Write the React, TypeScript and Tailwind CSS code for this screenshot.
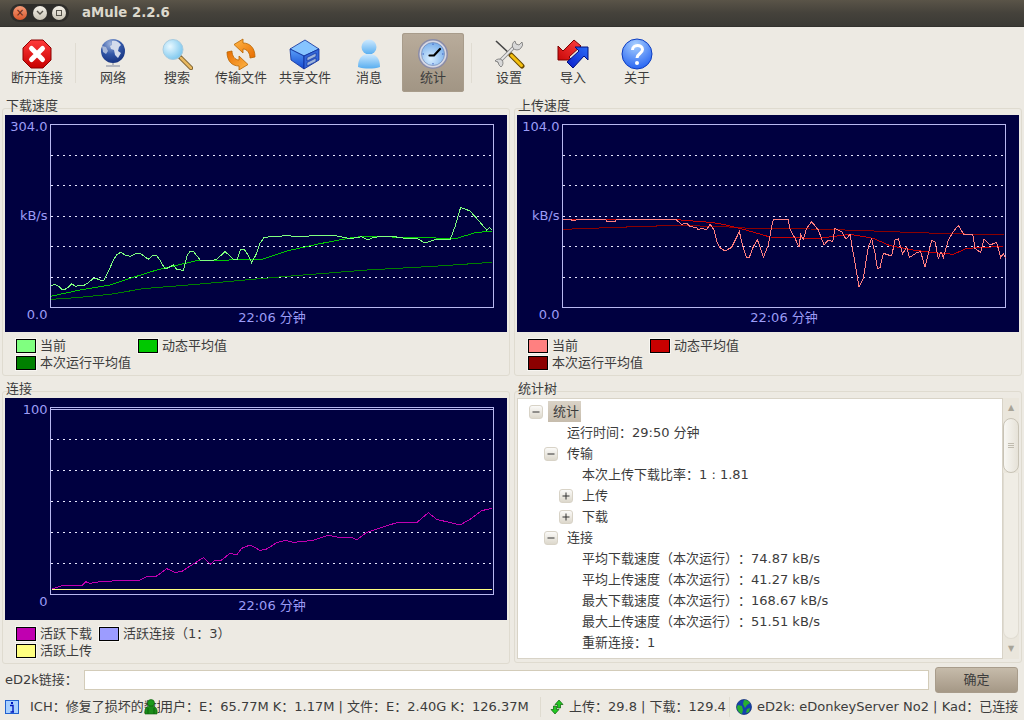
import type { ReactNode } from "react";

const FONT = "[font-family:'DejaVu_Sans','Noto_Sans_CJK_SC',sans-serif] [text-spacing-trim:space-all]";

// chart lines, read off the screenshot at 3x
const DL_NOW =
  "152,288 165,283 175,288 185,298 197,297 207,290 215,282 228,289 238,285 250,287 262,280 278,267 290,266 300,270 312,270 325,245 340,210 350,195 362,187 375,195 392,199 405,192 420,190 430,197 445,208 458,196 470,197 480,210 495,237 505,233 520,225 530,238 550,241 562,195 570,185 582,186 600,210 615,210 635,212 650,208 675,185 690,198 700,208 712,208 722,177 732,177 745,197 755,218 770,190 780,160 792,143 810,140 865,137 900,141 935,137 1000,136 1050,146 1085,140 1105,150 1120,142 1170,138 1215,145 1250,145 1275,159 1295,152 1310,147 1350,150 1365,110 1382,52 1410,63 1430,85 1460,120 1468,113 1476,120";
const DL_AVG =
  "152,319 240,300 330,285 400,262 470,240 590,212 785,208 860,183 960,161 1050,144 1090,139 1350,145 1370,145 1430,127 1476,124";
const DL_RUN =
  "152,328 230,323 330,313 430,296 600,282 860,259 1100,240 1300,229 1476,217";
const UL_NOW =
  "158,89 182,89 190,92 204,89 288,89 290,95 316,95 318,89 498,89 515,103 530,99 540,110 560,112 565,120 575,115 590,120 600,102 612,120 622,160 632,175 645,183 665,172 688,125 700,175 710,202 718,202 730,170 742,149 750,170 760,202 775,165 785,110 790,89 835,89 840,118 855,145 867,172 872,133 880,147 890,115 905,95 925,120 942,165 955,150 968,155 975,115 995,125 1008,148 1020,133 1030,190 1047,292 1060,265 1075,170 1085,146 1095,190 1102,235 1110,233 1120,190 1145,198 1155,150 1165,147 1178,192 1190,170 1198,203 1220,188 1232,185 1245,232 1265,152 1275,155 1285,205 1293,185 1300,203 1315,150 1330,125 1345,106 1362,135 1388,133 1395,175 1412,188 1422,148 1440,165 1460,157 1472,203 1480,190 1486,203";
const UL_AVG =
  "158,89 500,89 600,97 640,103 700,118 780,141 830,142 920,146 1020,133 1090,145 1140,167 1210,180 1260,187 1330,193 1370,175 1480,169";
const UL_RUN =
  "158,118 320,112 500,106 640,110 720,115 900,117 1040,121 1220,128 1400,133 1482,133";
const CONN =
  "155,327 185,317 247,316 257,305 270,310 305,304 370,302 420,300 440,290 470,288 500,266 525,277 545,275 575,255 610,233 632,253 645,240 665,240 690,220 710,225 725,205 750,195 780,211 800,207 830,188 855,181 880,187 940,181 985,166 1015,172 1055,172 1070,180 1100,157 1190,128 1250,128 1285,98 1310,118 1380,135 1410,118 1445,92 1475,85";

const toPlot = (raw: string, dx: number, dy: number) =>
  raw
    .split(" ")
    .map((p) => {
      const [x, y] = p.split(",").map(Number);
      return `${x / 3 + dx},${y / 3 + dy}`;
    })
    .join(" ");

type Line = { points: string; color: string };

const Chart = ({
  height,
  frameH,
  grid,
  top,
  mid,
  bottom,
  bottomY,
  timeY,
  lines,
}: {
  height: number;
  frameH: number;
  grid: number[];
  top: string;
  mid?: string;
  bottom: string;
  bottomY: number;
  timeY: number;
  lines: Line[];
}) => (
  <svg width={502} height={height} className="block bg-[#000040]">
    <rect x={45.5} y={9.5} width={443} height={frameH} fill="none" stroke="#b8b8f0" />
    {grid.map((y) => (
      <line key={y} x1={46} x2={488} y1={y + 0.5} y2={y + 0.5} stroke="#e8e8ff" strokeDasharray="2 4" />
    ))}
    {lines.map((l) => (
      <polyline key={l.color} points={l.points} fill="none" stroke={l.color} strokeWidth={1} shapeRendering="crispEdges" />
    ))}
    <g fill="#9c9cf6" fontSize={13} fontFamily="'DejaVu Sans','Noto Sans CJK SC',sans-serif">
      <text x={42.500} y={16} textAnchor="end">{top}</text>
      {mid && <text x={42.500} y={105} textAnchor="end">{mid}</text>}
      <text x={42.500} y={bottomY} textAnchor="end">{bottom}</text>
      <text x={267} y={timeY} textAnchor="middle">22:06 分钟</text>
    </g>
  </svg>
);

const Group = ({ title, children }: { title: string; children: ReactNode }) => (
  <div className="flex flex-col">
    <div className="relative z-10 h-4 leading-4 ml-1 -mb-[6px]">{title}</div>
    <div className="flex-1 rounded-[3px] border border-[#dfdbd0] px-[2px] pt-[6px]">{children}</div>
  </div>
);

const LegendItem = ({ color, label }: { color: string; label: string }) => (
  <div className="flex items-center h-[17px]">
    <span className={`block w-[20px] h-[14px] border border-black outline outline-1 outline-[#f8f6f2] ${color}`} />
    <span className="ml-1 whitespace-nowrap">{label}</span>
  </div>
);

const Legend = ({ children }: { children: ReactNode }) => (
  <div className="grid grid-cols-[auto_auto] justify-start content-start gap-x-[7px] pl-[11px] pt-[5px] h-[43px]">{children}</div>
);

const ToolBtn = ({ label, active, children }: { label: string; active?: boolean; children: ReactNode }) => (
  <div
    className={`h-[59px] flex flex-col items-center rounded-[3px] ${
      active ? "w-[62px] mx-px bg-gradient-to-b from-[#b9ac9b] to-[#a19584] shadow-[inset_0_0_0_1px_#a89c8b]" : "w-16"
    }`}
  >
    <div className="h-8 mt-[5px] flex items-center justify-center">{children}</div>
    <div className="leading-4 whitespace-nowrap">{label}</div>
  </div>
);

const Sep = () => <div className="w-[12px] h-[40px] mt-[10px] flex justify-center"><div className="w-px h-full bg-[#e0dcd2]" /></div>;

const StopIcon = () => (
  <svg width={32} height={32} viewBox="0 0 32 32">
    <defs>
      <linearGradient id="st" x1="0" y1="0" x2="0" y2="1">
        <stop offset="0" stopColor="#ff3a3a" />
        <stop offset="1" stopColor="#c80000" />
      </linearGradient>
    </defs>
    <path d="M10 2h12l8 8v12l-8 8H10l-8-8V10z" fill="url(#st)" stroke="#8c0000" strokeWidth={1} />
    <path d="M10.500 10.500l11 11M21.500 10.500l-11 11" stroke="#fff" strokeWidth={5} strokeLinecap="round" />
  </svg>
);

const GlobeIcon = () => (
  <svg width={32} height={32} viewBox="0 0 32 32">
    <defs>
      <radialGradient id="gl" cx="0.4" cy="0.2" r="0.85">
        <stop offset="0" stopColor="#9fb4dc" />
        <stop offset="0.5" stopColor="#3358a8" />
        <stop offset="1" stopColor="#14307c" />
      </radialGradient>
    </defs>
    <path d="M16 25v2M9 28h14" stroke="#a4a8b4" strokeWidth={1.500} />
    <circle cx={16} cy={13} r={12} fill="url(#gl)" />
    <path d="M15 3c4-1 7 1 9 4l-2 2-1 4 3 2-3 5-3-3-1-5-3-1-1-3 2-1z" fill="#d4dcec" />
    <path d="M5 8l4 1 2 4-2 3-3-2z" fill="#a8b8d8" />
  </svg>
);

const SearchIcon = () => (
  <svg width={32} height={32} viewBox="0 0 32 32">
    <defs>
      <radialGradient id="se" cx="0.35" cy="0.35" r="0.8">
        <stop offset="0" stopColor="#e8f8ff" />
        <stop offset="1" stopColor="#6cc0ec" />
      </radialGradient>
    </defs>
    <path d="M19 19l11 11" stroke="#7a6030" strokeWidth={4.500} strokeLinecap="round" />
    <path d="M20 20l10 10" stroke="#e8b860" strokeWidth={2.500} strokeLinecap="round" />
    <circle cx={12} cy={11.500} r={10} fill="url(#se)" stroke="#a8cce0" />
  </svg>
);

const TransferIcon = () => (
  <svg width={32} height={32} viewBox="0 0 32 32">
    <defs>
      <linearGradient id="tr" x1="0" y1="0" x2="1" y2="1">
        <stop offset="0" stopColor="#ffb848" />
        <stop offset="1" stopColor="#e86c00" />
      </linearGradient>
    </defs>
    <path d="M9 6.500L18 1v4c7 0 12 5 12 14l-5 1c0-5-3-9-7-9v4z" fill="url(#tr)" stroke="#b86400" strokeWidth={0.8} />
    <path d="M9 6.500L18 1v4c7 0 12 5 12 14l-5 1c0-5-3-9-7-9v4z" fill="url(#tr)" stroke="#b86400" strokeWidth={0.8} transform="rotate(180 16 16.500)" />
  </svg>
);

const CubeIcon = () => (
  <svg width={32} height={32} viewBox="0 0 32 32">
    <defs>
      <linearGradient id="cu" x1="0" y1="0" x2="0" y2="1">
        <stop offset="0" stopColor="#5aa0f8" />
        <stop offset="1" stopColor="#1448d0" />
      </linearGradient>
    </defs>
    <path d="M16 2L1 11l14 7 15-7z" fill="#86c4ff" stroke="#0c2c98" strokeWidth={0.8} />
    <path d="M1 11l14 7v13L2 22z" fill="url(#cu)" stroke="#0c2c98" strokeWidth={0.8} />
    <path d="M15 18l15-7v11l-15 9z" fill="#3466d8" stroke="#0c2c98" strokeWidth={0.8} />
    <path d="M18 19.500l9-4.500v3.500l-9 4.500zM18 24.500l9-4.500v3.500l-9 4.500z" fill="#9cb4dc" stroke="#0c2c98" strokeWidth={0.6} />
  </svg>
);

const PersonIcon = () => (
  <svg width={32} height={32} viewBox="0 0 32 32">
    <defs>
      <linearGradient id="pe" x1="0" y1="0" x2="0" y2="1">
        <stop offset="0" stopColor="#cfeaff" />
        <stop offset="1" stopColor="#58aef0" />
      </linearGradient>
    </defs>
    <circle cx={16} cy={9} r={7.500} fill="url(#pe)" />
    <path d="M5 29c0-9 4-13 11-13s11 4 11 13c-6 2-16 2-22 0z" fill="url(#pe)" />
  </svg>
);

const ClockIcon = () => (
  <svg width={32} height={32} viewBox="0 0 32 32">
    <defs>
      <radialGradient id="cl" cx="0.4" cy="0.7" r="0.8">
        <stop offset="0" stopColor="#d8eeff" />
        <stop offset="1" stopColor="#6ca6e8" />
      </radialGradient>
    </defs>
    <circle cx={16} cy={16} r={15} fill="#8a8ca8" />
    <circle cx={16} cy={16} r={13.500} fill="#d6d8e4" />
    <circle cx={16} cy={16} r={11.500} fill="url(#cl)" stroke="#6a7ea8" strokeWidth={0.6} />
    <path d="M12.500 17.500h4.500L23 11" fill="none" stroke="#000" strokeWidth={2.200} strokeLinecap="round" />
    <path d="M16 5.500v1.500M16 25v1.500M5.500 16H7M25 16h1.500" stroke="#3c5cc0" strokeWidth={1} />
  </svg>
);

const ToolsIcon = () => (
  <svg width={32} height={32} viewBox="0 0 32 32">
    <path d="M3 3l14 13" stroke="#444" strokeWidth={1.600} />
    <path d="M18 17l11 11" stroke="#6a4a00" strokeWidth={5} strokeLinecap="round" />
    <path d="M18.500 17.500l10 10" stroke="#f4c010" strokeWidth={3} strokeLinecap="round" />
    <path d="M5 25L23 7" stroke="#8a8a8a" strokeWidth={3.500} />
    <path d="M5 25L23 7" stroke="#e8e8e8" strokeWidth={1.800} />
    <path d="M22 3a5 5 0 0 0-2 7 5 5 0 0 0 8 0 5 5 0 0 0 1-6l-3 3-3-1-1-3z" fill="#d8d8d8" stroke="#666" strokeWidth={0.7} />
    <path d="M8 29a5 5 0 0 0 1-7 5 5 0 0 0-7 1l3 1 1 3z" fill="#d8d8d8" stroke="#666" strokeWidth={0.7} />
  </svg>
);

const ImportIcon = () => (
  <svg width={34} height={32} viewBox="0 0 34 32">
    <defs>
      <linearGradient id="re" x1="1" y1="0" x2="0" y2="1">
        <stop offset="0" stopColor="#ff4040" />
        <stop offset="1" stopColor="#c80808" />
      </linearGradient>
      <linearGradient id="bl" x1="1" y1="0" x2="0" y2="1">
        <stop offset="0" stopColor="#2a6cf8" />
        <stop offset="1" stopColor="#0a1cc8" />
      </linearGradient>
    </defs>
    <path d="M2 22V8l5 5L18 2l7 6-12 11 3 3z" fill="url(#re)" stroke="#7c0000" strokeWidth={1} />
    <path d="M32 9H19l4 4-12 11 6 6 11-12 4 4z" fill="url(#bl)" stroke="#00107c" strokeWidth={1} />
  </svg>
);

const AboutIcon = () => (
  <svg width={32} height={32} viewBox="0 0 32 32">
    <defs>
      <radialGradient id="ab" cx="0.45" cy="0.2" r="0.9">
        <stop offset="0" stopColor="#a8d0ff" />
        <stop offset="1" stopColor="#1858f0" />
      </radialGradient>
    </defs>
    <circle cx={16} cy={16} r={15} fill="url(#ab)" stroke="#0c3cc0" />
    <path d="M11.500 12c0-6 10-6 10-.5 0 4-5.500 4-5.500 8.500" fill="none" stroke="#fff" strokeWidth={3} />
    <circle cx={16} cy={25} r={2} fill="#fff" />
  </svg>
);

const InfoIcon = () => (
  <svg width={14} height={14} viewBox="0 0 14 14" className="block shrink-0">
    <rect x={0.5} y={0.5} width={13} height={13} fill="#a8d0ff" stroke="#2060d0" />
    <path d="M5 5.500h3V12M5.500 12H9" fill="none" stroke="#0018c0" strokeWidth={1.400} />
    <rect x={6} y={2} width={2} height={2} fill="#0018c0" />
  </svg>
);

const UserIcon = () => (
  <svg width={14} height={16} viewBox="0 0 14 16" className="block">
    <circle cx={7} cy={4} r={3.500} fill="#1a9a1a" stroke="#0a5a0a" strokeWidth={0.6} />
    <path d="M1 15c-1-6 2-8 6-8s7 2 6 8z" fill="#1a8c1a" stroke="#0a5a0a" strokeWidth={0.6} />
    <path d="M4 9v6M10 9v6" stroke="#0a5a0a" strokeWidth={0.8} />
  </svg>
);

const UpDownIcon = () => (
  <svg width={14} height={16} viewBox="0 0 14 16" className="block shrink-0">
    <path d="M9 1l4 4.500h-2.500V9h-3V5.500H5z" fill="#22c822" stroke="#0c5c0c" strokeWidth={0.7} />
    <path d="M5 15L1 10.500h2.500V7h3v3.500H9z" fill="#22c822" stroke="#0c5c0c" strokeWidth={0.7} />
  </svg>
);

const NetIcon = () => (
  <svg width={16} height={16} viewBox="0 0 16 16" className="block shrink-0">
    <circle cx={8} cy={8} r={7.500} fill="#1440b0" stroke="#0c2c70" strokeWidth={0.7} />
    <path d="M8 1c3 0 5 1 6 3l-3 2-2 3-2-4zM2 6l4 1 1 4-1 4c-3-1-5-4-5-7zM11 10l3-1-1 4-3 1z" fill="#28b030" />
  </svg>
);

const Expander = ({ open }: { open: boolean }) => (
  <span className="block w-[14px] h-[14px] rounded-[3px] bg-gradient-to-b from-[#fbfaf8] to-[#ddd8cc] border border-[#d8d3c7] shrink-0">
    <svg width={12} height={12} viewBox="0 0 12 12" className="block">
      <path d={open ? "M2.500 6h7" : "M2.500 6h7M6 2.500v7"} stroke="#333" strokeWidth={1} />
    </svg>
  </span>
);

const TREE: { pl: string; exp?: boolean; text: string; sel?: boolean }[] = [
  { pl: "pl-[11px]", exp: true, text: "统计", sel: true },
  { pl: "pl-[49px]", text: "运行时间：29:50 分钟" },
  { pl: "pl-[26px]", exp: true, text: "传输" },
  { pl: "pl-[64px]", text: "本次上传下载比率：1 : 1.81" },
  { pl: "pl-[41px]", exp: false, text: "上传" },
  { pl: "pl-[41px]", exp: false, text: "下载" },
  { pl: "pl-[26px]", exp: true, text: "连接" },
  { pl: "pl-[64px]", text: "平均下载速度（本次运行）：74.87 kB/s" },
  { pl: "pl-[64px]", text: "平均上传速度（本次运行）：41.27 kB/s" },
  { pl: "pl-[64px]", text: "最大下载速度（本次运行）：168.67 kB/s" },
  { pl: "pl-[64px]", text: "最大上传速度（本次运行）：51.51 kB/s" },
  { pl: "pl-[64px]", text: "重新连接：1" },
];

export default function App() {
  return (
    <div className={`w-[1024px] h-[720px] overflow-hidden flex flex-col bg-[#edeae3] text-[13px] text-[#3c3c3c] ${FONT}`}>
      {/* title bar */}
      <div className="h-[27px] shrink-0 flex items-center bg-gradient-to-b from-[#5a5448] via-[#45423b] to-[#3b3a35] border-b border-[#33322e]">
        <div className="ml-[10px] w-[59px] h-[18px] rounded-full bg-[#2e2d2a] flex items-center justify-between px-[3px]">
          <span className="w-[14px] h-[14px] rounded-full bg-gradient-to-b from-[#f59a76] to-[#d9562a] flex items-center justify-center text-[10px] leading-none text-[#5a2010]">×</span>
          <span className="w-[14px] h-[14px] rounded-full bg-gradient-to-b from-[#f5f2ea] to-[#c8c3b4] flex items-center justify-center">
            <svg width={8} height={6} viewBox="0 0 8 6"><path d="M1 1l3 3 3-3" fill="none" stroke="#55524a" strokeWidth={1.400} /></svg>
          </span>
          <span className="w-[14px] h-[14px] rounded-full bg-gradient-to-b from-[#f5f2ea] to-[#c8c3b4] flex items-center justify-center">
            <span className="block w-[6px] h-[6px] border border-[#55524a]" />
          </span>
        </div>
        <div className="ml-[13px] font-bold text-[#dcd8cc] text-[13.3px]">aMule 2.2.6</div>
      </div>

      {/* toolbar */}
      <div className="h-[71px] shrink-0 flex items-start pl-[5px] pt-[6px]">
        <ToolBtn label="断开连接"><StopIcon /></ToolBtn>
        <Sep />
        <ToolBtn label="网络"><GlobeIcon /></ToolBtn>
        <ToolBtn label="搜索"><SearchIcon /></ToolBtn>
        <ToolBtn label="传输文件"><TransferIcon /></ToolBtn>
        <ToolBtn label="共享文件"><CubeIcon /></ToolBtn>
        <ToolBtn label="消息"><PersonIcon /></ToolBtn>
        <ToolBtn label="统计" active><ClockIcon /></ToolBtn>
        <Sep />
        <ToolBtn label="设置"><ToolsIcon /></ToolBtn>
        <ToolBtn label="导入"><ImportIcon /></ToolBtn>
        <ToolBtn label="关于"><AboutIcon /></ToolBtn>
      </div>

      {/* graphs */}
      <div className="px-[2px] grid grid-cols-[508px_508px] gap-x-1 grid-rows-[277px_282px] gap-y-[6px] shrink-0">
        <Group title="下载速度">
          <Chart
            height={217}
            frameH={183}
            grid={[40, 70, 101, 131, 162]}
            top="304.0"
            mid="kB/s"
            bottom="0.0"
            bottomY={204}
            timeY={207}
            lines={[
              { points: toPlot(DL_RUN, -5, 75), color: "#008000" },
              { points: toPlot(DL_AVG, -5, 75), color: "#00c800" },
              { points: toPlot(DL_NOW, -5, 75), color: "#80ff80" },
            ]}
          />
          <Legend>
            <LegendItem color="bg-[#80ff80]" label="当前" />
            <LegendItem color="bg-[#00c800]" label="动态平均值" />
            <LegendItem color="bg-[#008000]" label="本次运行平均值" />
          </Legend>
        </Group>
        <Group title="上传速度">
          <Chart
            height={217}
            frameH={183}
            grid={[40, 70, 101, 131, 162]}
            top="104.0"
            mid="kB/s"
            bottom="0.0"
            bottomY={204}
            timeY={207}
            lines={[
              { points: toPlot(UL_RUN, -7, 75), color: "#8c0000" },
              { points: toPlot(UL_AVG, -7, 75), color: "#c80000" },
              { points: toPlot(UL_NOW, -7, 75), color: "#ff8080" },
            ]}
          />
          <Legend>
            <LegendItem color="bg-[#ff8080]" label="当前" />
            <LegendItem color="bg-[#c80000]" label="动态平均值" />
            <LegendItem color="bg-[#8c0000]" label="本次运行平均值" />
          </Legend>
        </Group>
        <Group title="连接">
          <Chart
            height={222}
            frameH={187}
            grid={[41, 72, 103, 134, 165]}
            top="100"
            bottom="0"
            bottomY={208}
            timeY={212}
            lines={[
              { points: "46,11.5 488,11.5", color: "#b8b8f0" },
              { points: toPlot("155,328 1476,328", -5, 82), color: "#ffff80" },
              { points: toPlot(CONN, -5, 82), color: "#c000b0" },
            ]}
          />
          <Legend>
            <LegendItem color="bg-[#c000b0]" label="活跃下载" />
            <LegendItem color="bg-[#9c9cff]" label="活跃连接（1：3）" />
            <LegendItem color="bg-[#ffff80]" label="活跃上传" />
          </Legend>
        </Group>
        <Group title="统计树">
          <div className="flex h-[261px]">
            <div className="w-[486px] h-full bg-white border border-[#d8d3c7] pt-[2px] overflow-hidden">
              {TREE.map((r) => (
                <div key={r.text} className={`flex items-center h-[21px] whitespace-nowrap ${r.pl}`}>
                  {r.exp !== undefined && <Expander open={r.exp} />}
                  {r.sel ? (
                    <span className="ml-[5px] pl-[5px] pr-[2px] h-[21px] leading-[21px] bg-gradient-to-b from-[#dad3c7] to-[#c6bcac]">{r.text}</span>
                  ) : (
                    <span className={r.exp !== undefined ? "ml-[9px]" : ""}>{r.text}</span>
                  )}
                </div>
              ))}
            </div>
            <div className="w-4 h-full relative bg-[#eae6dc] flex flex-col items-center text-[8px] leading-none text-[#a8a498]">
              <div className="h-5 flex items-center">▲</div>
              <div className="w-full h-[55px] rounded-full bg-gradient-to-r from-[#f8f7f3] to-[#e6e2d8] border border-[#c8c3b6] flex flex-col items-center justify-center gap-[1px]">
                <span className="block w-[6px] h-px bg-[#c0bbae]" />
                <span className="block w-[6px] h-px bg-[#c0bbae]" />
                <span className="block w-[6px] h-px bg-[#c0bbae]" />
              </div>
              <div className="flex-1 w-full rounded-b-full bg-[#f0ede5] border-x border-b border-[#e0dcd2]" />
              <div className="h-5 flex items-center">▼</div>
            </div>
          </div>
        </Group>
      </div>

      {/* ed2k link row */}
      <div className="h-[31px] shrink-0 flex items-center pl-[5px] pr-[6px] pt-[2px]">
        <span className="w-[79px] whitespace-nowrap">eD2k链接：</span>
        <div className="w-[845px] h-5 bg-white border border-[#d3ccb9]" />
        <div className="ml-[6px] w-[83px] h-[26px] rounded-[3px] bg-gradient-to-b from-[#c6bbaa] to-[#a59886] border border-[#a89c8b] flex items-center justify-center">确定</div>
      </div>

      {/* status bar */}
      <div className="relative h-[26px] flex items-center pl-[5px] whitespace-nowrap">
        <InfoIcon />
        <div className="ml-[11px] w-[130px] overflow-hidden">ICH：修复了损坏的数据</div>
        <div className="absolute left-[144px] top-[5px]"><UserIcon /></div>
        <div className="w-[381px] h-[20px] leading-5 border-r border-[#dfdbd0]">用户：E：65.77M K：1.17M | 文件：E：2.40G K：126.37M</div>
        <div className="ml-[9px]"><UpDownIcon /></div>
        <div className="ml-[5px] w-[161px] h-[20px] leading-5 border-r border-[#dfdbd0]">上传：29.8 | 下载：129.4</div>
        <div className="ml-[6px]"><NetIcon /></div>
        <div className="ml-[5px]">eD2k: eDonkeyServer No2 | Kad：已连接</div>
      </div>
    </div>
  );
}
